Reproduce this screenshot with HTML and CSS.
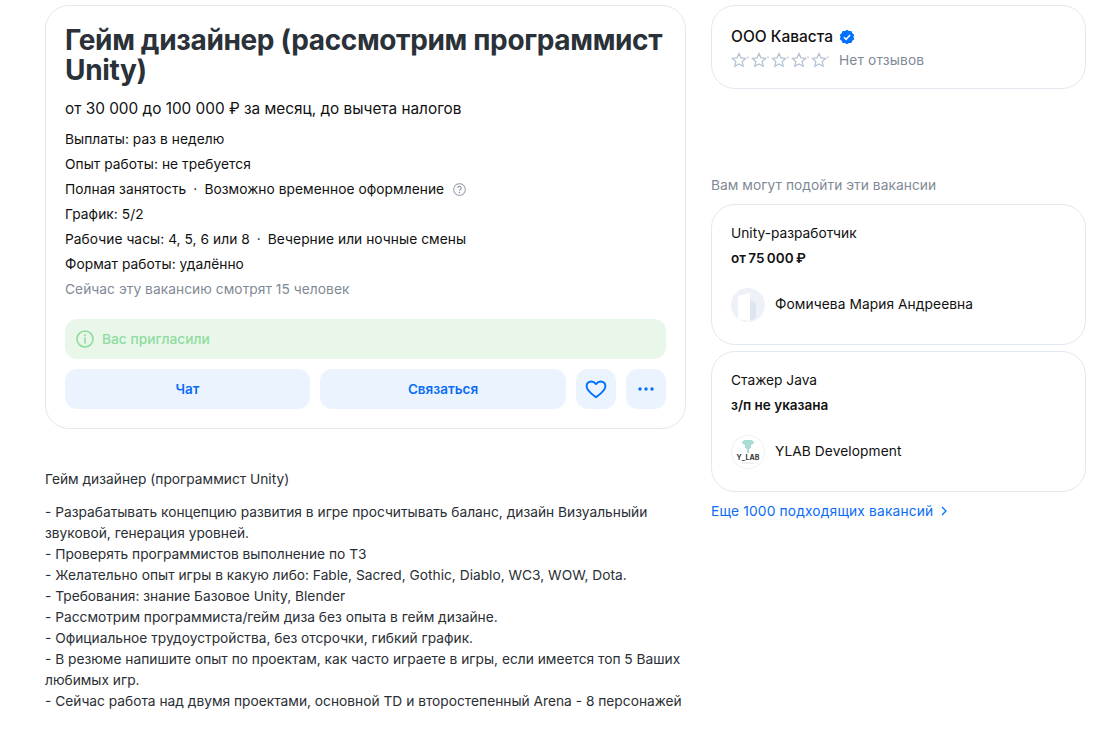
FILE: index.html
```html
<!DOCTYPE html>
<html lang="ru">
<head>
<meta charset="utf-8">
<title>Гейм дизайнер</title>
<link rel="stylesheet" href="styles.css">
</head>
<body>
<div class="page">
  <main class="main">
    <section class="card vacancy">
      <h1 class="title">Гейм дизайнер (рассмотрим программист Unity)</h1>
      <p class="salary">от 30 000 до 100 000 ₽ за месяц, до вычета налогов</p>
      <ul class="facts">
        <li>Выплаты: раз в неделю</li>
        <li>Опыт работы: не требуется</li>
        <li>Полная занятость<span class="sep">·</span>Возможно временное оформление<svg class="help" viewBox="0 0 16 16" width="15" height="15"><circle cx="8" cy="8" r="6.2" fill="none" stroke="#a3acb8" stroke-width="1.3"/><path d="M6.2 6.4a1.8 1.8 0 1 1 2.9 1.4c-.7.5-1.1.8-1.1 1.6" fill="none" stroke="#8b95a2" stroke-width="1.2"/><circle cx="8" cy="11.3" r=".8" fill="#8b95a2"/></svg></li>
        <li>График: 5/2</li>
        <li>Рабочие часы: 4, 5, 6 или 8<span class="sep">·</span>Вечерние или ночные смены</li>
        <li>Формат работы: удалённо</li>
        <li class="muted">Сейчас эту вакансию смотрят 15 человек</li>
      </ul>
      <div class="notice">
        <svg viewBox="0 0 20 20" width="20" height="20"><circle cx="10" cy="10" r="8" fill="none" stroke="#8fdc9f" stroke-width="1.6"/><path d="M10 9v5" stroke="#8fdc9f" stroke-width="1.7" stroke-linecap="round"/><circle cx="10" cy="6.3" r="1" fill="#8fdc9f"/></svg>
        <span>Вас пригласили</span>
      </div>
      <div class="actions">
        <a class="btn">Чат</a>
        <a class="btn">Связаться</a>
        <a class="btn"><svg viewBox="0 0 24 24" width="24" height="24"><path d="M12 20.2C8 17.2 2.8 13.9 2.6 9.2 2.5 6.300 4.700 4.500 7.200 4.500c2 0 3.600 1 4.800 2.600 1.200-1.600 2.800-2.600 4.800-2.600 2.500 0 4.700 1.800 4.600 4.700-.2 4.700-5.400 8-9.400 11z" fill="none" stroke="#0070ff" stroke-width="1.9" stroke-linejoin="round"/></svg></a>
        <a class="btn"><svg viewBox="0 0 24 24" width="24" height="24"><circle cx="6" cy="12" r="1.700" fill="#0070ff"/><circle cx="12" cy="12" r="1.700" fill="#0070ff"/><circle cx="18" cy="12" r="1.700" fill="#0070ff"/></svg></a>
      </div>
    </section>
    <section class="description">
      <p>Гейм дизайнер (программист Unity)</p>
      <p>- Разрабатывать концепцию развития в игре просчитывать баланс, дизайн Визуальныйи звуковой, генерация уровней.<br>
      - Проверять программистов выполнение по ТЗ<br>
      - Желательно опыт игры в какую либо: Fable, Sacred, Gothic, Diablo, WC3, WOW, Dota.<br>
      - Требования: знание Базовое Unity, Blender<br>
      - Рассмотрим программиста/гейм диза без опыта в гейм дизайне.<br>
      - Официальное трудоустройства, без отсрочки, гибкий график.<br>
      - В резюме напишите опыт по проектам, как часто играете в игры, если имеется топ 5 Ваших любимых игр.<br>
      - Сейчас работа над двумя проектами, основной TD и второстепенный Arena - 8 персонажей</p>
    </section>
  </main>
  <aside class="side">
    <section class="card company">
      <div class="company-name">ООО Каваста
        <svg viewBox="0 0 16 16" width="16" height="16"><path d="M8 .8l2 1.300 2.400-.1.900 2.200 1.900 1.500-.7 2.300.7 2.300-1.900 1.500-.9 2.200-2.400-.1-2 1.300-2-1.300-2.400.1-.9-2.200L.8 10.300 1.500 8 .8 5.700l1.900-1.500.9-2.200L6 2.100z" fill="#0070ff"/><path d="M5 8.200l2.100 2.100L11.100 6" fill="none" stroke="#fff" stroke-width="1.500"/></svg>
      </div>
      <div class="rating">
        <span class="stars">
          <svg viewBox="0 0 20 16" width="20" height="16"><path d="M8 1.500l2 4.300 4.600.6-3.400 3.200.9 4.600L8 12l-4.100 2.200.9-4.600L1.400 6.400 6 5.800z M17 4.500v1.500" fill="none" stroke="#b4c2d2" stroke-width="1.300"/></svg>
          <svg viewBox="0 0 20 16" width="20" height="16"><path d="M8 1.500l2 4.300 4.600.6-3.400 3.200.9 4.600L8 12l-4.100 2.200.9-4.600L1.400 6.400 6 5.800z M17 4.500v1.500" fill="none" stroke="#b4c2d2" stroke-width="1.300"/></svg>
          <svg viewBox="0 0 20 16" width="20" height="16"><path d="M8 1.500l2 4.300 4.600.6-3.400 3.200.9 4.600L8 12l-4.100 2.200.9-4.600L1.400 6.400 6 5.800z M17 4.500v1.500" fill="none" stroke="#b4c2d2" stroke-width="1.300"/></svg>
          <svg viewBox="0 0 20 16" width="20" height="16"><path d="M8 1.500l2 4.300 4.600.6-3.400 3.200.9 4.600L8 12l-4.100 2.200.9-4.600L1.400 6.400 6 5.800z M17 4.500v1.500" fill="none" stroke="#b4c2d2" stroke-width="1.300"/></svg>
          <svg viewBox="0 0 20 16" width="20" height="16"><path d="M8 1.500l2 4.300 4.600.6-3.400 3.200.9 4.600L8 12l-4.100 2.200.9-4.600L1.400 6.400 6 5.800z M17 4.500v1.500" fill="none" stroke="#b4c2d2" stroke-width="1.300"/></svg>
        </span>
        <span class="no-reviews">Нет отзывов</span>
      </div>
    </section>
    <h2 class="side-title">Вам могут подойти эти вакансии</h2>
    <section class="card job">
      <div class="job-name">Unity-разработчик</div>
      <div class="job-pay">от 75 000 ₽</div>
      <div class="employer">
        <span class="avatar">
          <svg viewBox="0 0 34 34" width="34" height="34"><circle cx="17" cy="17" r="17" fill="#eef2f8"/><path d="M7 31V8l12-3v28z" fill="#fff"/><path d="M19 12l6 3v15l-6 3z" fill="#dde5ef"/></svg>
        </span>
        <span class="employer-name">Фомичева Мария Андреевна</span>
      </div>
    </section>
    <section class="card job">
      <div class="job-name">Стажер Java</div>
      <div class="job-pay job-pay-text">з/п не указана</div>
      <div class="employer">
        <span class="avatar">
          <svg viewBox="0 0 34 34" width="34" height="34"><circle cx="17" cy="17" r="16.500" fill="#fff" stroke="#eef0f2"/><path d="M13 5h8l2.500 3-3.500 2v3l-2 1v4h-2v-4l-2-1v-3l-3.500-2z" fill="#a9dcd4"/><text x="17" y="24.500" text-anchor="middle" class="logo-text">Y_LAB</text><path d="M11 28h12" stroke="#ccc" stroke-width=".6"/></svg>
        </span>
        <span class="employer-name">YLAB Development</span>
      </div>
    </section>
    <a class="more">Еще 1000 подходящих вакансий
      <svg viewBox="0 0 12 12" width="12" height="12"><path d="M4 2l4 4-4 4" fill="none" stroke="#0070ff" stroke-width="1.300"/></svg>
    </a>
  </aside>
</div>
</body>
</html>
```
FILE: styles.css
```css
* { box-sizing: border-box; }
html, body { margin: 0; padding: 0; background: #fff; }
body {
  height: 738px;
  overflow: hidden;
  font-family: Inter, "Noto Sans", sans-serif;
  color: #1f2a33;
}
.page {
  display: flex;
  gap: 25px;
  padding: 5px 31px 0 45px;
  align-items: flex-start;
}
.main { width: 641px; flex: none; }
.side { width: 375px; flex: none; }
.card {
  background: #fff;
  border: 1px solid #e3e8f0;
  border-radius: 24px;
}
.vacancy { height: 424px; padding: 19px 19px 0; }
.title {
  margin: 0;
  font-size: 28px;
  line-height: 30px;
  font-weight: 700;
  color: #2a3138;
  letter-spacing: -0.35px;
}
.salary { margin: 13px 0 0; font-size: 15.350px; line-height: 22px; color: #111; }
.facts { list-style: none; margin: 7px 0 0; padding: 0; font-size: 13.750px; letter-spacing: .05px; line-height: 25px; color: #111; }
.sep { margin: 0 7px; }
.help { margin-left: 8px; vertical-align: -3px; }
.muted { color: #7f8a96; }
.notice {
  margin-top: 17px;
  height: 40px;
  border-radius: 12px;
  background: #e8f7ea;
  display: flex;
  align-items: center;
  gap: 7px;
  padding-left: 10px;
  color: #8fdc9f;
  font-size: 13.750px;
  font-weight: 500;
}
.actions {
  display: grid;
  grid-template-columns: 245px 246px 40px 40px;
  gap: 10px;
  margin-top: 10px;
}
.btn {
  height: 40px;
  border-radius: 12px;
  background: #ebf4fe;
  color: #0a6cf5;
  display: flex;
  align-items: center;
  justify-content: center;
  font-size: 13.500px;
  font-weight: 600;
}
.description { margin-top: 40px; font-size: 13.750px; line-height: 21px; color: #2a2f35; }
.description p { margin: 0 0 12px; }
.company { height: 84px; padding: 20px 19px 0; }
.company-name { display: flex; align-items: center; gap: 6px; font-size: 15.500px; line-height: 22px; font-weight: 500; color: #111; }
.rating { display: flex; align-items: center; gap: 8px; margin-top: 1px; height: 22px; }
.stars { display: flex; }
.no-reviews { font-size: 13.750px; letter-spacing: .15px; color: #7f8a96; }
.side-title { margin: 86px 0 0; font-size: 13.750px; letter-spacing: .05px; line-height: 20px; font-weight: 400; color: #7f8a96; }
.job { height: 141px; padding: 18px 19px 0; margin-top: 9px; font-size: 13.750px; color: #111; }
.job + .job { margin-top: 6px; }
.job-name { line-height: 20px; }
.job-pay { line-height: 20px; margin-top: 5px; font-weight: 600; font-size: 13.500px; word-spacing: -1px; }
.job-pay-text { word-spacing: 0; }
.employer { display: flex; align-items: center; gap: 10px; margin-top: 20px; letter-spacing: .08px; }
.employer-name { padding-bottom: 2px; }
.avatar { display: block; width: 34px; height: 34px; flex: none; }
.avatar svg { display: block; }
.logo-text { font-size: 7px; font-weight: 700; fill: #333; font-family: Inter, sans-serif; }
.more { display: flex; align-items: center; gap: 5px; margin-top: 9px; font-size: 13.750px; letter-spacing: .17px; line-height: 20px; color: #0a6cf5; }
```
